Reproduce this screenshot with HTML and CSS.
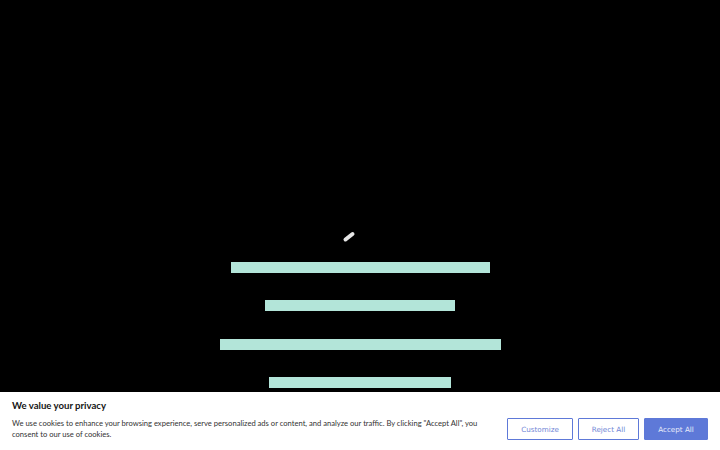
FILE: index.html
```html
<!DOCTYPE html>
<html>
<head>
<meta charset="utf-8">
<link rel="stylesheet" href="styles.css">
</head>
<body>
<main class="loader">
  <svg class="spinner" width="40" height="40" viewBox="0 0 40 40"><line x1="5.5" y1="17.5" x2="12.5" y2="12" stroke="#e6e6e6" stroke-width="4" stroke-linecap="round"/></svg>
  <div class="bars">
    <div class="bar" style="width:259px"></div>
    <div class="bar" style="width:190px"></div>
    <div class="bar" style="width:281px"></div>
    <div class="bar" style="width:182px"></div>
  </div>
</main>
<section class="consent">
  <h2 class="consent-title">We value your privacy</h2>
  <div class="consent-row">
    <p class="consent-text">We use cookies to enhance your browsing experience, serve personalized ads or content, and analyze our traffic. By clicking "Accept All", you consent to our use of cookies.</p>
    <div class="consent-actions">
      <button class="btn btn-outline btn-customize">Customize</button>
      <button class="btn btn-outline btn-reject">Reject All</button>
      <button class="btn btn-primary">Accept All</button>
    </div>
  </div>
</section>
</body>
</html>
```
FILE: styles.css
```css
html, body {
  margin: 0;
  padding: 0;
  background: #000;
  width: 720px;
  height: 450px;
  overflow: hidden;
}
body {
  display: flex;
  flex-direction: column;
  font-family: "Lato", "Noto Sans", sans-serif;
}
.loader {
  height: 392px;
  box-sizing: border-box;
  padding-top: 222px;
  display: flex;
  flex-direction: column;
  align-items: center;
}
.spinner {
  display: block;
}
.bars {
  display: flex;
  flex-direction: column;
  align-items: center;
  gap: 27.4px;
}
.bar {
  height: 11px;
  background: #b3e5d9;
}
.consent {
  background: #fff;
  flex: 1;
  padding: 8px 12px 0 12px;
  box-sizing: border-box;
}
.consent-title {
  margin: 0;
  font-size: 9.6px;
  line-height: 12px;
  font-weight: 700;
  color: #141414;
}
.consent-row {
  display: flex;
  align-items: center;
  justify-content: space-between;
  margin-top: 6px;
}
.consent-text {
  margin: 0;
  width: 472px;
  font-size: 7.6px;
  line-height: 11px;
  color: #333;
}
.consent-actions {
  display: flex;
  gap: 5px;
}
.btn {
  height: 22px;
  box-sizing: border-box;
  font-family: "DejaVu Sans", sans-serif;
  font-size: 7.2px;
  border: 1.5px solid #5e79d8;
  border-radius: 1px;
  padding: 0;
  display: flex;
  align-items: center;
  justify-content: center;
}
.btn-outline {
  background: #fff;
  color: #7186d6;
}
.btn-customize { width: 66px; }
.btn-reject { width: 61px; }
.btn-primary {
  width: 64px;
  background: #5e79d8;
  color: #e8ecfa;
}
```
